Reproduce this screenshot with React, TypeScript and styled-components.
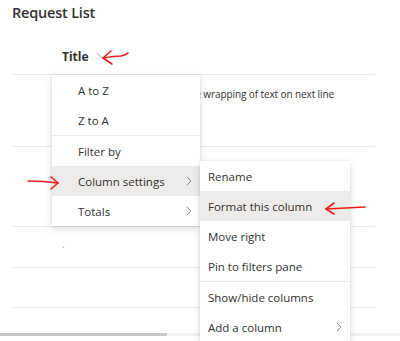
import React from "react";
import styled, { createGlobalStyle } from "styled-components";

const GlobalStyle = createGlobalStyle`
  html, body { margin: 0; padding: 0; background: #fff; }
  body { font-family: "Open Sans", "Noto Sans", Arial, sans-serif; color: #323130; }
`;

const Page = styled.div`
  position: relative;
  width: 400px;
  height: 341px;
  overflow: hidden;
  background: #fff;
`;

const PageTitle = styled.div`
  padding: 3px 0 0 12px;
  height: 31px;
  font-size: 14.5px;
  font-weight: 600;
  letter-spacing: -0.2px;
  color: #323130;
`;

const List = styled.div`
  margin-left: 12px;
  width: 363px;
`;

interface RowProps {
  $h: number;
}
const Row = styled.div<RowProps>`
  height: ${p => p.$h}px;
  border-bottom: 1px solid #edebe9;
  box-sizing: border-box;
  display: flex;
  align-items: flex-start;
  font-size: 10px;
  color: #323130;
`;

const HeaderRow = styled(Row)`
  align-items: center;
  padding-top: 4px;
`;

const HeaderCell = styled.div`
  display: flex;
  align-items: center;
  gap: 8px;
  padding-left: 50px;
  font-size: 12px;
  font-weight: 700;
  color: #323130;
`;

interface CellProps {
  $muted?: boolean;
}
const Cell = styled.div<CellProps>`
  padding: 10px 0 0 50px;
  white-space: nowrap;
  color: ${p => (p.$muted ? "#a19f9d" : "#323130")};
`;

const WrapCell = styled.div`
  width: 322px;
  padding-top: 12px;
  white-space: nowrap;
  letter-spacing: -0.1px;
  display: flex;
  justify-content: flex-end;
`;

const Scrollbar = styled.div`
  margin-top: 25px;
  height: 3px;
  width: 400px;
  background: #f3f2f1;
  display: flex;
`;

const ScrollThumb = styled.div`
  width: 167px;
  background: #c8c6c4;
`;

interface MenuProps {
  $left: number;
  $top: number;
  $width: number;
}
const Menu = styled.div<MenuProps>`
  position: absolute;
  left: ${p => p.$left}px;
  top: ${p => p.$top}px;
  width: ${p => p.$width}px;
  background: #fff;
  box-shadow: 0 3px 8px rgba(0, 0, 0, 0.13), 0 0 2px rgba(0, 0, 0, 0.11);
  display: flex;
  flex-direction: column;
`;

interface ItemProps {
  $indent: number;
  $active?: boolean;
}
const Item = styled.div<ItemProps>`
  height: 30px;
  display: flex;
  align-items: center;
  justify-content: space-between;
  padding: 0 8px 0 ${p => p.$indent}px;
  font-size: 11.5px;
  color: #323130;
  background: ${p => (p.$active ? "#edebe9" : "transparent")};
  white-space: nowrap;
`;

const Divider = styled.div`
  height: 1px;
  background: #edebe9;
`;

const Overlay = styled.svg`
  position: absolute;
  left: 0;
  top: 0;
  pointer-events: none;
`;

const Chevron = ({ dir }: { dir: "right" | "down" }) =>
  dir === "right" ? (
    <svg width="6" height="10" viewBox="0 0 6 10">
      <path d="M0.8 0.8 L5 5 L0.8 9.2" fill="none" stroke="#8a8886" strokeWidth="1" />
    </svg>
  ) : (
    <svg width="11" height="6" viewBox="0 0 11 6">
      <path d="M0.5 0.5 L5.5 5.3 L10.5 0.5" fill="none" stroke="#a19f9d" strokeWidth="1" />
    </svg>
  );

type MenuItem = { label: string; sub?: boolean; active?: boolean };

const sortItems: MenuItem[] = [{ label: "A to Z" }, { label: "Z to A" }];
const moreItems: MenuItem[] = [
  { label: "Filter by" },
  { label: "Column settings", sub: true, active: true },
  { label: "Totals", sub: true },
];
const settingsItems: MenuItem[] = [
  { label: "Rename" },
  { label: "Format this column", active: true },
  { label: "Move right" },
  { label: "Pin to filters pane" },
];
const viewItems: MenuItem[] = [
  { label: "Show/hide columns" },
  { label: "Add a column", sub: true },
];

const renderItems = (items: MenuItem[], indent: number) =>
  items.map(it => (
    <Item key={it.label} $indent={indent} $active={it.active}>
      <span>{it.label}</span>
      {it.sub && <Chevron dir="right" />}
    </Item>
  ));

export default function App() {
  return (
    <>
      <GlobalStyle />
      <Page>
        <PageTitle>Request List</PageTitle>
        <List>
          <HeaderRow $h={41}>
            <HeaderCell>
              Title <Chevron dir="down" />
            </HeaderCell>
          </HeaderRow>
          <Row $h={72}>
            <WrapCell>
              <span>This is a long title to test the wrapping of text on next line</span>
            </WrapCell>
          </Row>
          <Row $h={80} />
          <Row $h={41}>
            <Cell $muted>.</Cell>
          </Row>
          <Row $h={40} />
        </List>
        <Scrollbar>
          <ScrollThumb />
        </Scrollbar>

        <Menu $left={52} $top={75} $width={148}>
          {renderItems(sortItems, 26)}
          <Divider />
          {renderItems(moreItems, 26)}
        </Menu>

        <Menu $left={200} $top={161} $width={150}>
          {renderItems(settingsItems, 8)}
          <Divider />
          {renderItems(viewItems, 8)}
        </Menu>

        <Overlay width="400" height="341" viewBox="0 0 400 341">
          <g fill="none" stroke="#ee1c1c" strokeWidth="1.6" strokeLinecap="round" strokeLinejoin="round">
            <path d="M103 58 Q115 56 121 56 Q126 55 128 53" />
            <path d="M111 51 L103 58 L112 64" />
            <path d="M28 181 Q44 181 58 183" />
            <path d="M51 177 L58 183 L51 189" />
            <path d="M326 209 Q346 208 365 207" />
            <path d="M334 203 L326 209 L334 214" />
          </g>
        </Overlay>
      </Page>
    </>
  );
}
